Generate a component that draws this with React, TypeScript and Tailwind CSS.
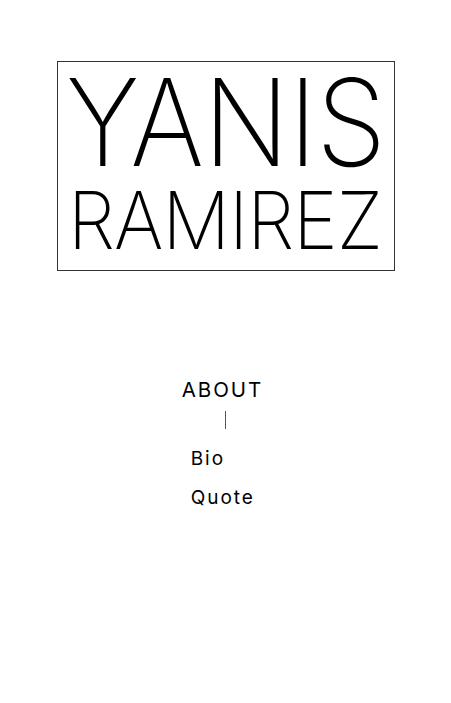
export default function App() {
  return (
    <div className="min-h-screen bg-white flex flex-col items-center pt-[61px] text-black" style={{ fontFamily: "Inter, 'Noto Sans', sans-serif" }}>
      <div className="w-[338px] h-[210px] border border-[#333] flex flex-col items-center">
        <h1 className="font-extralight text-[121px] leading-[100px] mt-[10px] scale-x-[0.93] tracking-[-1px]">YANIS</h1>
        <h2 className="font-extralight text-[80px] leading-[70px] mt-[13px] scale-x-[0.94] tracking-[-1px]">RAMIREZ</h2>
      </div>

      <nav className="mt-[104px] flex flex-col items-center">
        <a className="text-[20.5px] tracking-[2px] mr-[6px]">ABOUT</a>
        <span className="w-px h-[18px] bg-[#555] mt-[5px]" />
        <ul className="mt-[16px] flex flex-col gap-[11px] text-[19px] tracking-[2px] self-start ml-[9px]">
          <li>Bio</li>
          <li>Quote</li>
        </ul>
      </nav>
    </div>
  );
}
